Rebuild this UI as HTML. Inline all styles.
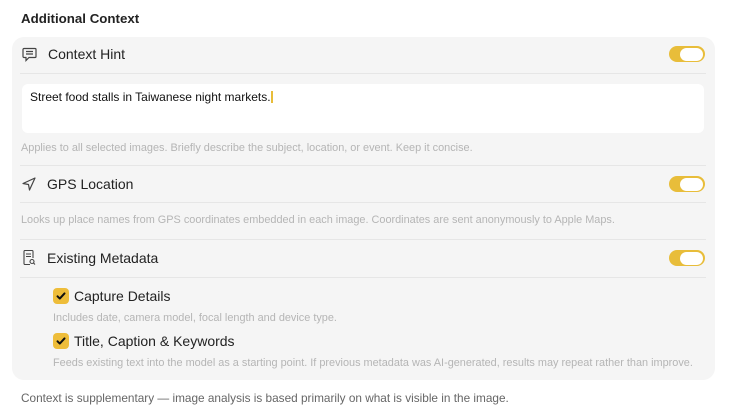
<!DOCTYPE html>
<html><head><style>
*{margin:0;padding:0;box-sizing:border-box}
body{width:730px;height:418px;background:#fff;font-family:"Liberation Sans",sans-serif;position:relative;overflow:hidden;color:#1d1d1f}
.a{position:absolute;white-space:nowrap}
.card{position:absolute;left:12px;top:37px;width:703px;height:343px;background:#f5f5f5;border-radius:12px}
.div{position:absolute;left:20px;width:686px;height:1px;background:#e6e6e6}
.lbl{font-size:14px;color:#222}
.sm{font-size:10.9px;color:#b5b5b5}
.tog{position:absolute;left:669px;width:36px;height:16px;border-radius:8px;background:#e8bd3a}
.tog:after{content:"";position:absolute;right:2px;top:1.5px;width:23px;height:13px;border-radius:6.5px;background:#fff}
.cb{position:absolute;left:53px;width:16px;height:16px;border-radius:4px;background:#eebd3a}
</style></head><body>
<div class="a" style="left:21px;top:11px;font-size:13.3px;font-weight:bold;color:#222">Additional Context</div>
<div class="card"></div>
<svg class="a" style="left:22px;top:47px" width="15" height="15" viewBox="0 0 15 15" fill="none" stroke="#444" stroke-width="1.2"><path d="M2 1.5h11a1 1 0 0 1 1 1v7a1 1 0 0 1-1 1H7l-3 3v-3H2a1 1 0 0 1-1-1v-7a1 1 0 0 1 1-1z"/><path d="M4 4.5h7M4 7h7"/></svg>
<div class="a lbl" style="left:48px;top:46px">Context Hint</div>
<div class="tog" style="top:46px"></div>
<div class="div" style="top:73px"></div>
<div class="a" style="left:22px;top:84px;width:682px;height:49px;background:#fff;border-radius:6px"></div>
<div class="a" style="left:30px;top:90px;font-size:12px;color:#111">Street food stalls in Taiwanese night markets.<span style="display:inline-block;width:2px;height:12px;background:#e8bd3a;vertical-align:-2px"></span></div>
<div class="a sm" style="left:21px;top:142px">Applies to all selected images. Briefly describe the subject, location, or event. Keep it concise.</div>
<div class="div" style="top:165px"></div>
<svg class="a" style="left:22px;top:177px" width="14" height="14" viewBox="0 0 14 14" fill="none" stroke="#444" stroke-width="1.2" stroke-linejoin="round"><path d="M13 1L1 6.5l5.5 1 1 5.5z"/></svg>
<div class="a lbl" style="left:47px;top:176px">GPS Location</div>
<div class="tog" style="top:176px"></div>
<div class="div" style="top:202px"></div>
<div class="a sm" style="left:21px;top:214px">Looks up place names from GPS coordinates embedded in each image. Coordinates are sent anonymously to Apple Maps.</div>
<div class="div" style="top:239px"></div>
<svg class="a" style="left:23px;top:250px" width="13" height="16" viewBox="0 0 13 16" fill="none" stroke="#444" stroke-width="1.1"><path d="M7 14.5H2a1 1 0 0 1-1-1v-12a1 1 0 0 1 1-1h7a1 1 0 0 1 1 1V8"/><path d="M3 4h5M3 6.5h5"/><circle cx="9" cy="11.5" r="2"/><path d="M10.5 13l1.5 1.5"/></svg>
<div class="a lbl" style="left:47px;top:250px">Existing Metadata</div>
<div class="tog" style="top:250px"></div>
<div class="div" style="top:277px"></div>
<div class="cb" style="top:288px"></div>
<svg class="a" style="left:55px;top:290px" width="12" height="12" viewBox="0 0 12 12" fill="none" stroke="#111" stroke-width="2" stroke-linecap="round" stroke-linejoin="round"><path d="M2.5 6.3l2.3 2.3 4.7-5.2"/></svg>
<div class="a lbl" style="left:74px;top:288px">Capture Details</div>
<div class="a sm" style="left:53px;top:312px">Includes date, camera model, focal length and device type.</div>
<div class="cb" style="top:333px"></div>
<svg class="a" style="left:55px;top:335px" width="12" height="12" viewBox="0 0 12 12" fill="none" stroke="#111" stroke-width="2" stroke-linecap="round" stroke-linejoin="round"><path d="M2.5 6.3l2.3 2.3 4.7-5.2"/></svg>
<div class="a lbl" style="left:74px;top:333px">Title, Caption &amp; Keywords</div>
<div class="a sm" style="left:53px;top:357px">Feeds existing text into the model as a starting point. If previous metadata was AI-generated, results may repeat rather than improve.</div>
<div class="a" style="left:21px;top:391px;font-size:11.8px;color:#666">Context is supplementary — image analysis is based primarily on what is visible in the image.</div>
</body></html>
